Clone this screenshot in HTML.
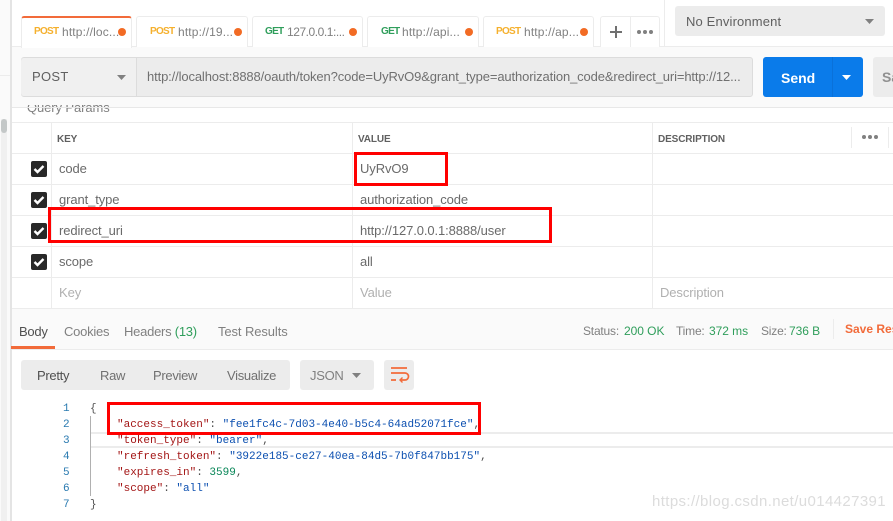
<!DOCTYPE html>
<html><head><meta charset="utf-8"><style>
html,body{margin:0;padding:0;background:#fff}
#p{position:relative;width:893px;height:521px;overflow:hidden;background:#fff;font-family:"Liberation Sans",sans-serif;font-size:12px;color:#808080}
#p div{position:absolute;box-sizing:border-box}
.t{white-space:nowrap;line-height:16px}
.tab{top:16px;height:31px;background:#fff;border:1px solid #ececec;border-bottom:none;border-radius:3px 3px 0 0}
.dot{width:8px;height:8px;border-radius:50%;background:#f26b24;top:28px}
.m{font-weight:bold;font-size:10px;top:24px;letter-spacing:-.7px}
.u{top:24px;font-size:12px;color:#808080;letter-spacing:.15px}
.h{background:#ececec}
.k{font-size:13px;color:#6a6a6a;letter-spacing:-.1px}
.th{font-size:10px;font-weight:bold;color:#606060;top:132px;letter-spacing:-.12px}
.cb{left:31px;width:16px;height:16px;background:#282828;border-radius:2px}
.mono{font-family:"Liberation Mono",monospace;font-size:11px;line-height:16px;white-space:pre}
.r{background:#f00}
.n{color:#2a7ab0;left:63px;width:6px;text-align:right}
.b{top:324px;font-size:13px;letter-spacing:-.25px}
.v{top:368px;font-size:13px;letter-spacing:-.3px;color:#707070}
.s{top:323px;font-size:12px;letter-spacing:-.2px;color:#808080}
.g{color:#2f9e5b;letter-spacing:-.05px}
</style></head><body><div id="p">
<div style="left:0;top:0;width:11px;height:521px;background:#fafafa"></div>
<div style="left:10px;top:0;width:2px;height:521px;background:#e4e4e4"></div>
<div style="left:1px;top:119px;width:6px;height:402px;background:#f0f0f0"></div>
<div style="left:1px;top:119px;width:6px;height:14px;background:#c4c8c8;border-radius:3px"></div>
<div style="left:0;top:75px;width:10px;height:1px;background:#ececec"></div>

<div style="left:12px;top:46px;width:881px;height:61px;background:#fafafa"></div>
<div style="left:12px;top:46px;width:881px;height:1px;background:#ececec"></div>

<div style="left:12px;top:105px;width:881px;height:12px;overflow:hidden">
<div class="t" style="left:15px;top:-5px;font-size:13px;color:#808080;letter-spacing:-.1px">Query Params</div>
</div>
<div style="left:12px;top:107px;width:881px;height:1px;background:#e8e8e8"></div>

<div class="tab" style="left:21px;width:111px;height:32px;border-top:2px solid #f26b3a;z-index:2"></div>
<div class="t m" style="left:34px;color:#f5b02d;z-index:3">POST</div><div class="t u" style="left:62px;z-index:3">http://loc...</div><div class="dot" style="left:118px;z-index:3"></div>
<div class="tab" style="left:136px;width:112px"></div>
<div class="t m" style="left:150px;color:#f5b02d">POST</div><div class="t u" style="left:178px">http://19...</div><div class="dot" style="left:234px"></div>
<div class="tab" style="left:252px;width:111px"></div>
<div class="t m" style="left:265px;color:#2f9e5b">GET</div><div class="t u" style="left:287px;letter-spacing:-.45px">127.0.0.1:...</div><div class="dot" style="left:349px"></div>
<div class="tab" style="left:367px;width:112px"></div>
<div class="t m" style="left:381px;color:#2f9e5b">GET</div><div class="t u" style="left:402px">http://api...</div><div class="dot" style="left:465px"></div>
<div class="tab" style="left:483px;width:111px"></div>
<div class="t m" style="left:496px;color:#f5b02d">POST</div><div class="t u" style="left:524px">http://ap...</div><div class="dot" style="left:580px"></div>
<div class="tab" style="left:600px;width:60px"></div>
<div style="left:630px;top:16px;width:1px;height:31px;background:#ececec"></div>
<div style="left:610px;top:31px;width:12px;height:2px;background:#707070"></div>
<div style="left:615px;top:26px;width:2px;height:12px;background:#707070"></div>
<div style="left:637px;top:30px;width:4px;height:4px;border-radius:50%;background:#808080"></div>
<div style="left:643px;top:30px;width:4px;height:4px;border-radius:50%;background:#808080"></div>
<div style="left:649px;top:30px;width:4px;height:4px;border-radius:50%;background:#808080"></div>
<div style="left:664px;top:0;width:1px;height:46px;background:#ececec"></div>
<div class="h" style="left:675px;top:6px;width:210px;height:30px;border-radius:3px"></div>
<div class="t" style="left:686px;top:14px;font-size:13px;color:#606060;letter-spacing:.15px">No Environment</div>
<svg style="position:absolute;left:865px;top:19px" width="10" height="6"><path d="M0 0h9L4.500 5z" fill="#808080"/></svg>

<div class="h" style="left:21px;top:57px;width:732px;height:40px;border:1px solid #dcdcdc;border-radius:3px"></div>
<div style="left:136px;top:58px;width:1px;height:38px;background:#dcdcdc"></div>
<div style="left:21px;top:58px;width:115px;height:38px;background:#f0f0f0;border-radius:3px 0 0 3px"></div>
<div class="t" style="left:32px;top:69px;font-size:13px;color:#606060;letter-spacing:.3px">POST</div>
<svg style="position:absolute;left:117px;top:75px" width="10" height="6"><path d="M0 0h9L4.500 5z" fill="#808080"/></svg>
<div class="t" style="left:147px;top:69px;font-size:13px;color:#707070;letter-spacing:-.13px">http://localhost:8888/oauth/token?code=UyRvO9&amp;grant_type=authorization_code&amp;redirect_uri=http://12...</div>
<div style="left:763px;top:57px;width:100px;height:40px;background:#0a7bea;border-radius:3px"></div>
<div style="left:832px;top:57px;width:1px;height:40px;background:#0a71d9"></div>
<div class="t" style="left:781px;top:70px;font-size:14px;font-weight:bold;color:#fff">Send</div>
<svg style="position:absolute;left:842px;top:75px" width="11" height="6"><path d="M0 0h9L4.500 5z" fill="#fff"/></svg>
<div class="h" style="left:873px;top:57px;width:30px;height:40px;border-radius:3px"></div>
<div class="t" style="left:882px;top:69px;font-size:14px;font-weight:bold;color:#909090">Sa</div>

<div style="left:12px;top:122px;width:881px;height:1px;background:#ececec"></div>
<div style="left:12px;top:153px;width:881px;height:1px;background:#ececec"></div>
<div style="left:12px;top:184px;width:881px;height:1px;background:#ececec"></div>
<div style="left:12px;top:215px;width:881px;height:1px;background:#ececec"></div>
<div style="left:12px;top:246px;width:881px;height:1px;background:#ececec"></div>
<div style="left:12px;top:277px;width:881px;height:1px;background:#ececec"></div>
<div style="left:12px;top:308px;width:881px;height:1px;background:#ececec"></div>
<div style="left:51px;top:122px;width:1px;height:186px;background:#ececec"></div>
<div style="left:352px;top:122px;width:1px;height:186px;background:#ececec"></div>
<div style="left:652px;top:122px;width:1px;height:186px;background:#ececec"></div>
<div style="left:851px;top:127px;width:1px;height:21px;background:#ececec"></div>
<div style="left:888px;top:127px;width:1px;height:21px;background:#ececec"></div>
<div class="t th" style="left:57px">KEY</div>
<div class="t th" style="left:358px">VALUE</div>
<div class="t th" style="left:658px">DESCRIPTION</div>
<div style="left:862px;top:135px;width:4px;height:4px;border-radius:50%;background:#808080"></div>
<div style="left:868px;top:135px;width:4px;height:4px;border-radius:50%;background:#808080"></div>
<div style="left:874px;top:135px;width:4px;height:4px;border-radius:50%;background:#808080"></div>

<div class="cb" style="top:161px"></div><svg style="position:absolute;left:33px;top:163px" width="12" height="12"><path d="M1.500 6l3 3 6-6" fill="none" stroke="#fff" stroke-width="2.400"/></svg>
<div class="cb" style="top:192px"></div><svg style="position:absolute;left:33px;top:194px" width="12" height="12"><path d="M1.500 6l3 3 6-6" fill="none" stroke="#fff" stroke-width="2.400"/></svg>
<div class="cb" style="top:223px"></div><svg style="position:absolute;left:33px;top:225px" width="12" height="12"><path d="M1.500 6l3 3 6-6" fill="none" stroke="#fff" stroke-width="2.400"/></svg>
<div class="cb" style="top:254px"></div><svg style="position:absolute;left:33px;top:256px" width="12" height="12"><path d="M1.500 6l3 3 6-6" fill="none" stroke="#fff" stroke-width="2.400"/></svg>

<div class="t k" style="left:59px;top:161px">code</div>
<div class="t k" style="left:59px;top:192px">grant_type</div>
<div class="t k" style="left:59px;top:223px">redirect_uri</div>
<div class="t k" style="left:59px;top:254px">scope</div>
<div class="t k" style="left:59px;top:285px;color:#b0b0b0">Key</div>
<div class="t k" style="left:360px;top:161px">UyRvO9</div>
<div class="t k" style="left:360px;top:192px">authorization_code</div>
<div class="t k" style="left:360px;top:223px">http://127.0.0.1:8888/user</div>
<div class="t k" style="left:360px;top:254px">all</div>
<div class="t k" style="left:360px;top:285px;color:#b0b0b0">Value</div>
<div class="t k" style="left:660px;top:285px;color:#b0b0b0">Description</div>

<div style="left:12px;top:309px;width:881px;height:40px;background:#fafafa"></div>
<div style="left:12px;top:349px;width:881px;height:1px;background:#ececec"></div>
<div style="left:11px;top:346px;width:44px;height:3px;background:#f26b3a"></div>
<div class="t b" style="left:19px;color:#505050">Body</div>
<div class="t b" style="left:64px">Cookies</div>
<div class="t b" style="left:124px">Headers <span style="color:#2f9e5b">(13)</span></div>
<div class="t b" style="left:218px;letter-spacing:-.1px">Test Results</div>
<div class="t s" style="left:583px">Status:</div>
<div class="t s g" style="left:624px">200 OK</div>
<div class="t s" style="left:676px">Time:</div>
<div class="t s g" style="left:709px">372 ms</div>
<div class="t s" style="left:761px">Size:</div>
<div class="t s g" style="left:789px">736 B</div>
<div style="left:833px;top:319px;width:1px;height:20px;background:#ececec"></div>
<div class="t" style="left:845px;top:321px;font-size:12px;font-weight:bold;color:#f26b3a">Save Res</div>

<div class="h" style="left:21px;top:360px;width:269px;height:30px;border-radius:3px"></div>
<div class="t v" style="left:37px;color:#505050">Pretty</div>
<div class="t v" style="left:100px">Raw</div>
<div class="t v" style="left:153px">Preview</div>
<div class="t v" style="left:227px">Visualize</div>
<div class="h" style="left:300px;top:360px;width:74px;height:30px;border-radius:3px"></div>
<div class="t v" style="left:310px;color:#808080">JSON</div>
<svg style="position:absolute;left:352px;top:373px" width="10" height="6"><path d="M0 0h9L4.500 5z" fill="#808080"/></svg>
<div class="h" style="left:384px;top:360px;width:30px;height:30px;border-radius:3px"></div>
<svg style="position:absolute;left:384px;top:360px" width="30" height="30"><path d="M7 8h16M7 13h14a3.500 3.500 0 0 1 0 7h-4M7 20h5" fill="none" stroke="#f26b3a" stroke-width="1.700"/><path d="M18.500 17.500l-2.500 2.500 2.500 2.500" fill="none" stroke="#f26b3a" stroke-width="1.400"/></svg>

<div style="left:90px;top:416px;width:1px;height:80px;background:#b0b0b0"></div>
<div style="left:91px;top:432px;width:802px;height:16px;background:#fff;border-top:2px solid #ececec;border-bottom:2px solid #ececec"></div>
<div class="mono n" style="top:401px">1</div>
<div class="mono n" style="top:417px">2</div>
<div class="mono n" style="top:433px">3</div>
<div class="mono n" style="top:449px">4</div>
<div class="mono n" style="top:465px">5</div>
<div class="mono n" style="top:481px">6</div>
<div class="mono n" style="top:497px">7</div>
<div class="mono" style="left:90px;top:401px;color:#505050">{</div>
<div class="mono" style="left:117px;top:417px;color:#a31515">"access_token"<span style="color:#505050">: </span><span style="color:#0b4fb0">"fee1fc4c-7d03-4e40-b5c4-64ad52071fce"</span><span style="color:#505050">,</span></div>
<div class="mono" style="left:117px;top:433px;color:#a31515">"token_type"<span style="color:#505050">: </span><span style="color:#0b4fb0">"bearer"</span><span style="color:#505050">,</span></div>
<div class="mono" style="left:117px;top:449px;color:#a31515">"refresh_token"<span style="color:#505050">: </span><span style="color:#0b4fb0">"3922e185-ce27-40ea-84d5-7b0f847bb175"</span><span style="color:#505050">,</span></div>
<div class="mono" style="left:117px;top:465px;color:#a31515">"expires_in"<span style="color:#505050">: </span><span style="color:#098658">3599</span><span style="color:#505050">,</span></div>
<div class="mono" style="left:117px;top:481px;color:#a31515">"scope"<span style="color:#505050">: </span><span style="color:#0b4fb0">"all"</span></div>
<div class="mono" style="left:90px;top:497px;color:#505050">}</div>

<div class="t" style="left:652px;top:494px;font-size:15px;color:#dcdcdc;letter-spacing:.38px">https://blog.csdn.net/u014427391</div>

<div class="r" style="left:354px;top:152px;width:94px;height:3px"></div>
<div class="r" style="left:354px;top:183px;width:94px;height:3px"></div>
<div class="r" style="left:354px;top:152px;width:3px;height:34px"></div>
<div class="r" style="left:445px;top:152px;width:3px;height:34px"></div>

<div class="r" style="left:48px;top:207px;width:504px;height:3px"></div>
<div class="r" style="left:48px;top:240px;width:504px;height:3px"></div>
<div class="r" style="left:48px;top:207px;width:3px;height:36px"></div>
<div class="r" style="left:549px;top:207px;width:3px;height:36px"></div>

<div class="r" style="left:107px;top:402px;width:374px;height:3px"></div>
<div class="r" style="left:107px;top:432px;width:374px;height:3px"></div>
<div class="r" style="left:107px;top:402px;width:3px;height:33px"></div>
<div class="r" style="left:478px;top:402px;width:3px;height:33px"></div>
</div></body></html>
